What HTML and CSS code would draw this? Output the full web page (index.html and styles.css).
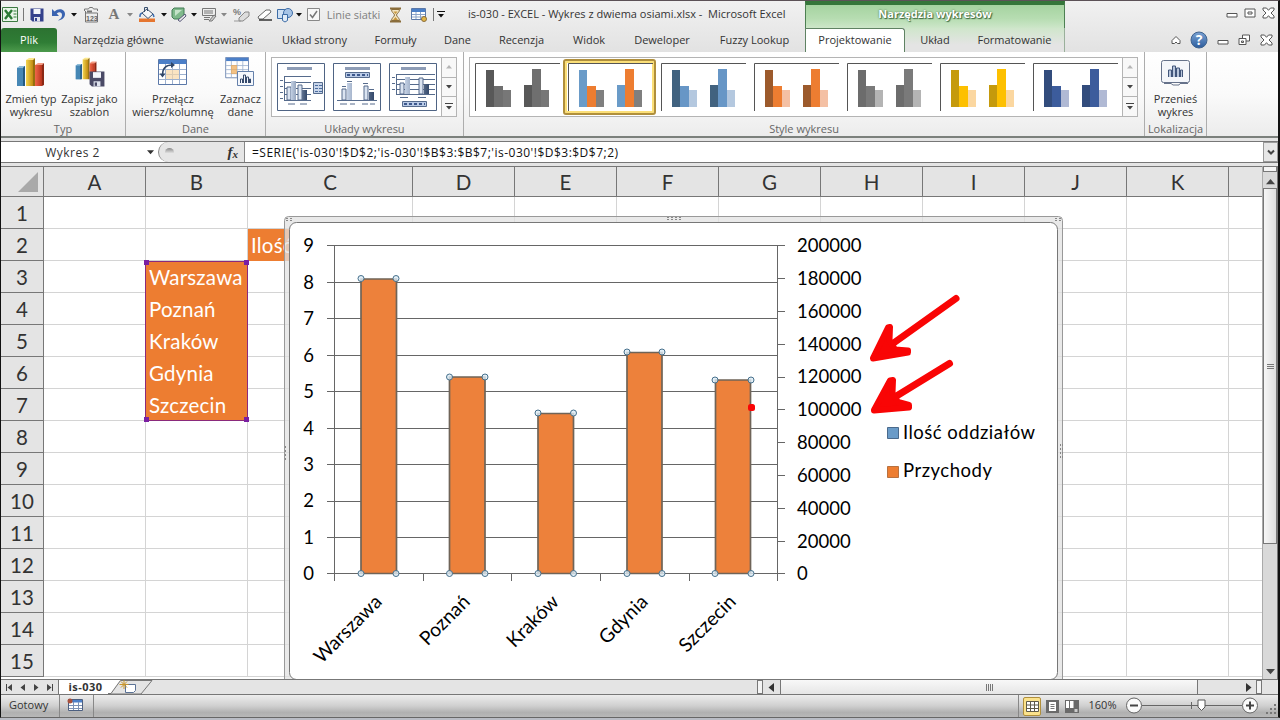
FILE: index.html
```
<!DOCTYPE html>
<html lang="pl">

<head>
    <meta charset="UTF-8">
    <title>is-030 - EXCEL - Wykres z dwiema osiami.xlsx - Microsoft Excel</title>
    <link rel="stylesheet" href="styles.css">
</head>

<body>
    <svg class="defs">
        <defs>
            <linearGradient id="gBlue"><stop offset="0" stop-color="#7db4dc"/><stop offset="1" stop-color="#2c6a9a"/></linearGradient>
            <linearGradient id="gYellow"><stop offset="0" stop-color="#f4d650"/><stop offset="1" stop-color="#c08a10"/></linearGradient>
            <linearGradient id="gRed"><stop offset="0" stop-color="#f0674a"/><stop offset="1" stop-color="#b8341c"/></linearGradient>
            <linearGradient id="gNavy"><stop offset="0" stop-color="#c3d0e4"/><stop offset="1" stop-color="#34496b"/></linearGradient>
            <linearGradient id="gHelp" x2="0" y2="1"><stop offset="0" stop-color="#7ba3d4"/><stop offset="1" stop-color="#2c5c9c"/></linearGradient>
        </defs>
        <symbol id="dd" viewBox="0 0 6 4"><path d="M0 0h6L3 3.5z" fill="currentColor"/></symbol>
        <symbol id="up" viewBox="0 0 6 4"><path d="M0 3.5h6L3 0z" fill="currentColor"/></symbol>
        <symbol id="more" viewBox="0 0 8 7"><path d="M0 .5h8" stroke="currentColor"/><path d="M1 3h6L4 6.5z" fill="currentColor"/></symbol>
        <symbol id="bars3d" viewBox="0 0 30 30">
            <path d="M1 11l3-2h5l-1 20H1z" fill="url(#gBlue)"/>
            <path d="M1 11h6v18H1z" fill="#4687b5"/><path d="M1 11l3-2h5l-2 2z" fill="#8dbbd8"/><path d="M7 11l2-2v20H7z" fill="#245a82"/>
            <path d="M10 3h7v26h-7z" fill="url(#gYellow)"/><path d="M10 3l3-2h6l-2 2z" fill="#fbe88a"/><path d="M17 3l2-2v28h-2z" fill="#95700e"/>
            <path d="M19 8h7v21h-7z" fill="url(#gRed)"/><path d="M19 8l3-2h6l-2 2z" fill="#f59a80"/><path d="M26 8l2-2v22l-2 1z" fill="#8b2814"/>
        </symbol>
        <symbol id="floppy" viewBox="0 0 14 14"><path d="M.5 .5h13v13h-11l-2-2z" fill="currentColor"/><path d="M3.5 1h7v5h-7z" fill="#f3f5fa"/><path d="M4 9h6v4.500H4z" fill="#dfe3ee"/><path d="M5 10h2v3H5z" fill="currentColor"/></symbol>
        <symbol id="sheet" viewBox="0 0 30 27">
            <path d="M.5 .5h28v25H.5z" fill="#fff" stroke="#5b78a8"/><path d="M1 1h27v4H1z" fill="#4b7fc8"/>
            <path d="M1 10.500h27M1 15.500h27M1 20.500h27M7.500 5v20M14.500 5v20M21.500 5v20" stroke="#9db1cf" fill="none"/>
        </symbol>
        <symbol id="styleThumb" viewBox="0 0 86 49">
            <path d="M.5 48V.5H85" fill="none" stroke="#555"/>
            <path class="fa" d="M11 7h8v37h-8zM49 22h8v22h-8z"/>
            <path class="fb" d="M19 23h9v21h-9zM57 6h9v38h-9z"/>
            <path class="fc" d="M28 27h8v17h-8zM66 27h8v17h-8z"/>
        </symbol>
        <symbol id="min" viewBox="0 0 12 12"><path d="M1 6.500h10v3.500H1z" fill="#fff" stroke="#555"/></symbol>
        <symbol id="close" viewBox="0 0 13 12"><path d="M1 1h3.500l2 2.300L8.500 1H12v2L9 6l3 3v2H8.500l-2-2.300-2 2.300H1V9l3-3-3-3z" fill="#fff" stroke="#555"/></symbol>
    </svg>

    <div class="window">
        <div class="top">
            <div class="title_bar">
                <div class="qat">
                    <svg width="17" height="17"><path d="M.5 1.500h15v14H.5z" fill="#e9f4e8" stroke="#3d7a42"/><path d="M3 4l7 9M10 4l-7 9" stroke="#2c7a35" stroke-width="2.400"/><path d="M11.500 5h3M11.500 8h3M11.500 11h3" stroke="#2c7a35"/></svg>
                    <i class="sep"></i>
                    <svg class="navy" width="14" height="14"><use href="#floppy"/></svg>
                    <svg width="15" height="15"><path d="M1 2v7h7L5.700 6.600C8 4.300 11 5 11 8c0 2.500-1.500 4-4 5.500 4-.5 7-3 7-6.500C14 2.500 8 .5 3.600 4.500z" fill="#3a63b0"/></svg>
                    <svg class="black" width="6" height="4"><use href="#dd"/></svg>
                    <svg width="16" height="16"><path d="M1.500 4V2h4l1-1.500h3l1 1.500h4v2M2.500 4v11h12V6h-12" fill="none" stroke="#777"/><path d="M4 4.500h5" stroke="#777" stroke-width="2"/><text class="tiny" x="3" y="13.500">123</text></svg>
                    <b class="font_a">A</b>
                    <svg class="grey" width="6" height="4"><use href="#dd"/></svg>
                    <svg width="17" height="17"><path d="M1 12.500h16V16H1z" fill="#e57630"/><path d="M4 7l5-4 6 5-5 4.500z" fill="#f4f6fa" stroke="#39506f"/><path d="M6.500 6V1.500h3V5" fill="none" stroke="#39506f"/><path d="M4 7C1.500 8 2 10 2 11M15 8l1 3" stroke="#3f6fb2" stroke-width="1.500" fill="none"/></svg>
                    <svg class="black" width="6" height="4"><use href="#dd"/></svg>
                    <svg width="16" height="16"><path d="M3 1h10v8l-3 3H3L1 10V3z" fill="#7fb98b" stroke="#437c55"/><path d="M4 3h7L4 9z" fill="#c5e3c9"/><path d="M7 13l7-6 1 2-6 5.500z" fill="#eee" stroke="#557"/></svg>
                    <svg class="black" width="6" height="4"><use href="#dd"/></svg>
                    <svg width="16" height="16"><path d="M1.500 1.500h13v7h-13zM3 4h9M3 6h9M3 10.500h6M3 12.500h5" fill="none" stroke="#777"/><path d="M8 14l5-6 2 1-4 5z" fill="#ccc" stroke="#777"/></svg>
                    <svg class="grey" width="6" height="4"><use href="#dd"/></svg>
                    <svg width="18" height="16"><text class="pct" x="1" y="8">%</text><path d="M7 11l6-6h4v4l-6 5H7z" fill="#ddd" stroke="#888"/><path d="M2 14h7" stroke="#999"/></svg>
                    <svg width="17" height="14"><path d="M2 9l8-7h4l1 2-8 7H3z" fill="#fff" stroke="#666"/><path d="M3 12h13" stroke="#333" stroke-width="1.500"/></svg>
                    <svg width="18" height="16"><path d="M1.500 2.500h9v9h-9z" fill="#cfe0f3" stroke="#3d6ca6"/><circle cx="12" cy="6" r="4.500" fill="#a7c4e6" stroke="#3d6ca6"/><path d="M6.500 7.500h5v6l-2.500 1.500-2.500-1.500z" fill="#e0ebf7" stroke="#3d6ca6"/></svg>
                    <svg class="black" width="6" height="4"><use href="#dd"/></svg>
                    <svg width="13" height="13"><path d="M.5 .5h12v12H.5z" fill="#f7f7f7" stroke="#888"/><path d="M3 6.500l2.500 3L10 3" fill="none" stroke="#777" stroke-width="1.500"/></svg>
                    <span class="lines">Linie siatki</span>
                    <svg width="13" height="16"><path d="M1 1.500h11M1 14.500h11" stroke="#8a6d3b" stroke-width="2"/><path d="M2.500 2.500c0 3 3 4 3 5.500s-3 3-3 5.500h8c0-2.500-3-4-3-5.500s3-2.500 3-5.500z" fill="#f4e6c3" stroke="#8a6d3b"/><path d="M4 13l2.500-3L9 13zM4.500 4.500h4l-2 2.500z" fill="#c7953a"/></svg>
                    <svg width="17" height="16"><path d="M.5 1.500h14v11H.5z" fill="#fff" stroke="#5b78a8"/><path d="M1 2h13v3H1z" fill="#4b7fc8"/><path d="M1 7.500h13M1 10h13M5 5v7M9.500 5v7" stroke="#8ba3c8"/><circle cx="13" cy="12" r="2.500" fill="#e4b746" stroke="#8a6d3b"/></svg>
                    <i class="sep"></i>
                    <svg class="black" width="8" height="7"><use href="#more"/></svg>
                </div>
                <div class="title">is-030 - EXCEL - Wykres z dwiema osiami.xlsx -&nbsp; Microsoft Excel</div>
                <div class="context">Narzędzia wykresów</div>
                <div class="win_btns">
                    <svg width="12" height="12"><use href="#min"/></svg>
                    <svg width="12" height="12"><path d="M1 2h10v8H1z" fill="#fff" stroke="#555"/><path d="M4 5h4v2H4z" fill="none" stroke="#555"/></svg>
                    <svg width="13" height="12"><use href="#close"/></svg>
                </div>
            </div>
            <div class="tabs">
                <a class="file">Plik</a>
                <a>Narzędzia główne</a>
                <a>Wstawianie</a>
                <a>Układ strony</a>
                <a>Formuły</a>
                <a>Dane</a>
                <a>Recenzja</a>
                <a>Widok</a>
                <a>Deweloper</a>
                <a>Fuzzy Lookup</a>
                <a class="active">Projektowanie</a>
                <a class="ctx">Układ</a>
                <a class="ctx last">Formatowanie</a>
                <div class="doc_btns">
                    <svg width="10" height="10"><path d="M1 5.500L5 1.500l4 4v3H6.500L5 7 3.500 8.500H1z" fill="#fff" stroke="#555"/></svg>
                    <svg width="18" height="18"><circle cx="9" cy="9" r="8" fill="url(#gHelp)" stroke="#3f638f"/><text class="help" x="9" y="14">?</text></svg>
                    <svg width="12" height="12"><use href="#min"/></svg>
                    <svg width="13" height="12"><path d="M4.500 1h7v6h-7z" fill="#fff" stroke="#555"/><path d="M1 4.500h7v6H1z" fill="#fff" stroke="#555"/><path d="M3.500 7h2v1.500h-2z" fill="none" stroke="#555"/></svg>
                    <svg width="13" height="12"><use href="#close"/></svg>
                </div>
            </div>
        </div>

        <div class="ribbon">
            <div class="group g_type">
                <div class="tools">
                    <div class="tool"><svg width="30" height="30"><use href="#bars3d"/></svg><span>Zmień typ<br>wykresu</span></div>
                    <div class="tool"><svg width="32" height="30"><use href="#bars3d" width="25" height="23"/><g class="slate"><use href="#floppy" x="15" y="14" width="16" height="16"/></g></svg><span>Zapisz jako<br>szablon</span></div>
                </div>
                <h6>Typ</h6>
            </div>
            <div class="group g_data">
                <div class="tools">
                    <div class="tool"><svg width="30" height="30"><use href="#sheet" y="2" width="30" height="27"/><path d="M8 13h13v9H8z" fill="#f8d9a8" opacity=".7"/><path d="M4.500 18C4.500 11 8 8 14 8" fill="none" stroke="#2f4668" stroke-width="1.500"/><path d="M1.500 16.500h6l-3 4zM13 5v6l4-3z" fill="#2f4668"/></svg><span>Przełącz<br>wiersz/kolumnę</span></div>
                    <div class="tool"><svg width="30" height="30"><use href="#sheet" width="25" height="22"/><path d="M6 8h6v9H6z" fill="#f0a850" opacity=".7"/><path d="M12.500 14.500h16v14h-16z" fill="#f4f7fc" stroke="#6480aa"/><path d="M15.500 26v-4h2v4m1 0v-8h2v8m1 0v-6h2v6m1 0v-4h1v4" fill="none" stroke="#35496b"/></svg><span>Zaznacz<br>dane</span></div>
                </div>
                <h6>Dane</h6>
            </div>
            <div class="group g_layouts">
                <div class="gallery">
                    <div class="items">
                        <svg width="48" height="48"><path d="M.5 .5h47v47H.5z" fill="#fff" stroke="#4f6484"/><path d="M10 5.500h25" stroke="#8d9cb6" stroke-width="3"/><path d="M7 13.500h27M7 19.500h27M7 25.500h27M7 31.500h27M7 37.500h27M7.500 13v25M3 17.500h3M3 23.500h3M3 29.500h3M3 35.500h3M11 41h7M23 41h7" stroke="#566b8c" fill="none"/><path d="M10 24h4v13h-4zM21 22h4v15h-4z" fill="#dbe4f1" stroke="#566b8c"/><path d="M14 18h5v19h-5zM25 27h5v10h-5z" fill="url(#gNavy)"/><path d="M36.500 19.500h9v11h-9z" fill="#c8d5ea" stroke="#566b8c"/><path d="M38 22.500h3m1 0h3M38 25.500h3m1 0h3M38 28.500h3m1 0h3" stroke="#4b6c9e"/></svg>
                        <svg width="48" height="48"><path d="M.5 .5h47v47H.5z" fill="#fff" stroke="#4f6484"/><path d="M12 5.500h25" stroke="#8d9cb6" stroke-width="3"/><path d="M12.500 9.500h24v5h-24z" fill="#b9cae6" stroke="#566b8c"/><path d="M14 12h21" stroke="#3d588c" stroke-width="2" stroke-dasharray="3 2"/><path d="M4 37.500h40M7 41h7M17 41h5M29 41h6M37 41h5M9 23.500h4M14 18.500h5M30 20.500h5M36 26.500h5" stroke="#566b8c"/><path d="M9 26h4v11H9zM31 23h4v14h-4z" fill="#dbe4f1" stroke="#566b8c"/><path d="M14 20h5v17h-5zM36 29h5v8h-5z" fill="url(#gNavy)"/></svg>
                        <svg width="48" height="48"><path d="M.5 .5h47v47H.5z" fill="#fff" stroke="#4f6484"/><path d="M12 5.500h25" stroke="#8d9cb6" stroke-width="3"/><path d="M7 11.500h39M7 16.500h39M7 21.500h39M7 26.500h39M7 31.500h39M7.500 11v21M3 14.500h3M3 20.500h3M3 26.500h3M11 34.500h8M29 34.500h8" stroke="#566b8c"/><path d="M11 20h4v11h-4zM30 15h4v16h-4z" fill="#dbe4f1" stroke="#566b8c"/><path d="M16 14h5v17h-5zM35 21h5v10h-5z" fill="url(#gNavy)"/><path d="M13.500 38.500h24v5h-24z" fill="#b9cae6" stroke="#566b8c"/><path d="M15 41h21" stroke="#3d588c" stroke-width="2" stroke-dasharray="3 2"/></svg>
                    </div>
                    <div class="scroller">
                        <b class="off"><svg width="6" height="4"><use href="#up"/></svg></b>
                        <b><svg width="6" height="4"><use href="#dd"/></svg></b>
                        <b><svg width="8" height="7"><use href="#more"/></svg></b>
                    </div>
                </div>
                <h6>Układy wykresu</h6>
            </div>
            <div class="group g_styles">
                <div class="gallery">
                    <div class="styles">
                        <div class="style s1"><svg width="86" height="49"><use href="#styleThumb"/></svg></div>
                        <div class="style s2 selected"><svg width="86" height="49"><use href="#styleThumb"/></svg></div>
                        <div class="style s3"><svg width="86" height="49"><use href="#styleThumb"/></svg></div>
                        <div class="style s4"><svg width="86" height="49"><use href="#styleThumb"/></svg></div>
                        <div class="style s5"><svg width="86" height="49"><use href="#styleThumb"/></svg></div>
                        <div class="style s6"><svg width="86" height="49"><use href="#styleThumb"/></svg></div>
                        <div class="style s7"><svg width="86" height="49"><use href="#styleThumb"/></svg></div>
                    </div>
                    <div class="scroller">
                        <b class="off"><svg width="6" height="4"><use href="#up"/></svg></b>
                        <b><svg width="6" height="4"><use href="#dd"/></svg></b>
                        <b><svg width="8" height="7"><use href="#more"/></svg></b>
                    </div>
                </div>
                <h6>Style wykresu</h6>
            </div>
            <div class="group g_place">
                <div class="tools">
                    <div class="tool"><svg width="30" height="30"><rect x=".5" y="3.500" width="28" height="22" rx="2" fill="#f4f6fa" stroke="#66728a"/><path d="M3 26.500h7l2 1.500h6l1-1.500h8" stroke="#66728a" fill="none"/><path d="M7.500 20v-7h3v7m1 0V9h3v11m1 0v-9h3v9m1 0v-7h2v7" fill="#b9c6dc" stroke="#41557a"/></svg><span>Przenieś<br>wykres</span></div>
                </div>
                <h6>Lokalizacja</h6>
            </div>
        </div>

        <div class="formula_bar">
            <div class="name_box"><span>Wykres 2</span><svg width="7" height="5"><use href="#dd"/></svg></div>
            <div class="fx"><i class="knob"></i><em>f<sub>x</sub></em></div>
            <div class="formula">=SERIE('is-030'!$D$2;'is-030'!$B$3:$B$7;'is-030'!$D$3:$D$7;2)</div>
            <div class="expand"><svg width="8" height="7"><path d="M1 1.500l3 3 3-3" fill="none" stroke="#444" stroke-width="2"/></svg></div>
        </div>

        <div class="work">
            <div class="sheet">
                <table>
                    <colgroup><col class="c_num"><col><col><col class="c_wide"><col><col><col><col><col><col><col><col><col class="c_end"></colgroup>
                    <tr class="head"><th class="corner"><svg width="22" height="22"><path d="M21 1v20H1z" fill="#a9a9a9"/></svg></th><th>A</th><th>B</th><th>C</th><th>D</th><th>E</th><th>F</th><th>G</th><th>H</th><th>I</th><th>J</th><th>K</th><th></th></tr>
                    <tr><th>1</th><td></td><td></td><td></td><td></td><td></td><td></td><td></td><td></td><td></td><td></td><td></td><td></td></tr>
                    <tr><th>2</th><td></td><td></td><td class="fill">Ilość</td><td></td><td></td><td></td><td></td><td></td><td></td><td></td><td></td><td></td></tr>
                    <tr><th>3</th><td></td><td class="fill">Warszawa</td><td></td><td></td><td></td><td></td><td></td><td></td><td></td><td></td><td></td><td></td></tr>
                    <tr><th>4</th><td></td><td class="fill">Poznań</td><td></td><td></td><td></td><td></td><td></td><td></td><td></td><td></td><td></td><td></td></tr>
                    <tr><th>5</th><td></td><td class="fill">Kraków</td><td></td><td></td><td></td><td></td><td></td><td></td><td></td><td></td><td></td><td></td></tr>
                    <tr><th>6</th><td></td><td class="fill">Gdynia</td><td></td><td></td><td></td><td></td><td></td><td></td><td></td><td></td><td></td><td></td></tr>
                    <tr><th>7</th><td></td><td class="fill">Szczecin</td><td></td><td></td><td></td><td></td><td></td><td></td><td></td><td></td><td></td><td></td></tr>
                    <tr><th>8</th><td></td><td></td><td></td><td></td><td></td><td></td><td></td><td></td><td></td><td></td><td></td><td></td></tr>
                    <tr><th>9</th><td></td><td></td><td></td><td></td><td></td><td></td><td></td><td></td><td></td><td></td><td></td><td></td></tr>
                    <tr><th>10</th><td></td><td></td><td></td><td></td><td></td><td></td><td></td><td></td><td></td><td></td><td></td><td></td></tr>
                    <tr><th>11</th><td></td><td></td><td></td><td></td><td></td><td></td><td></td><td></td><td></td><td></td><td></td><td></td></tr>
                    <tr><th>12</th><td></td><td></td><td></td><td></td><td></td><td></td><td></td><td></td><td></td><td></td><td></td><td></td></tr>
                    <tr><th>13</th><td></td><td></td><td></td><td></td><td></td><td></td><td></td><td></td><td></td><td></td><td></td><td></td></tr>
                    <tr><th>14</th><td></td><td></td><td></td><td></td><td></td><td></td><td></td><td></td><td></td><td></td><td></td><td></td></tr>
                    <tr><th>15</th><td></td><td></td><td></td><td></td><td></td><td></td><td></td><td></td><td></td><td></td><td></td><td></td></tr>
                </table>

                <!-- zakres kategorii -->
                <div class="range"><i></i><i></i><i></i><i></i></div>

                <!-- wykres -->
                <div class="chart">
                    <svg width="780" height="464" viewBox="284 216 780 464">
                        <rect class="frame" x="284.500" y="216.500" width="778" height="475" rx="4"/>
                        <rect class="area" x="289.500" y="222.500" width="768" height="457" rx="7"/>
                        <path class="dots" d="M667 217.500h16M667 219.500h16M286 218.500h7M286 220.500h7M1055 218.500h7M1055 220.500h7M285.500 446v14M1060.500 444v14M1062.500 444v14"/>
                        <path class="axis" d="M327 245.500h450M327 282.500h450M327 318.500h450M327 355.500h450M327 391.500h450M327 428.500h450M327 464.500h450M327 501.500h450M327 537.500h450M327 573.500h450"/>
                        <path class="axis" d="M334.500 245v336M423.500 574v7M511.500 574v7M600.500 574v7M689.500 574v7M777.500 245v336"/>
                        <path class="axis" d="M778 245.500h7M778 278.500h7M778 311.500h7M778 344.500h7M778 377.500h7M778 409.500h7M778 442.500h7M778 475.500h7M778 508.500h7M778 541.500h7M778 573.500h7"/>
                        <g class="bars">
                            <path d="M361 279h35.500v294.500H361zM449.500 377H485v196.500h-35.500zM538 413.500h35.500v160H538zM627 352.500h35v221h-35zM715.500 380h35v193.500h-35z"/>
                        </g>
                        <g class="handles">
                            <circle cx="361" cy="278.500" r="3"/><circle cx="396" cy="278.500" r="3"/><circle cx="361" cy="573.500" r="3"/><circle cx="396" cy="573.500" r="3"/>
                            <circle cx="449.500" cy="377" r="3"/><circle cx="485" cy="377" r="3"/><circle cx="449.500" cy="573.500" r="3"/><circle cx="485" cy="573.500" r="3"/>
                            <circle cx="538" cy="413" r="3"/><circle cx="573.500" cy="413" r="3"/><circle cx="538" cy="573.500" r="3"/><circle cx="573.500" cy="573.500" r="3"/>
                            <circle cx="627" cy="352" r="3"/><circle cx="662" cy="352" r="3"/><circle cx="627" cy="573.500" r="3"/><circle cx="662" cy="573.500" r="3"/>
                            <circle cx="715" cy="380" r="3"/><circle cx="751" cy="380" r="3"/><circle cx="715" cy="573.500" r="3"/><circle cx="751" cy="573.500" r="3"/>
                        </g>
                        <g class="label left">
                            <text x="308.500" y="252">9</text><text x="308.500" y="288.500">8</text><text x="308.500" y="325">7</text><text x="308.500" y="361.500">6</text><text x="308.500" y="398">5</text>
                            <text x="308.500" y="434.500">4</text><text x="308.500" y="470.500">3</text><text x="308.500" y="507">2</text><text x="308.500" y="543.500">1</text><text x="308.500" y="580">0</text>
                        </g>
                        <g class="label">
                            <text x="797" y="252">200000</text><text x="797" y="284.500">180000</text><text x="797" y="317.500">160000</text><text x="797" y="350.500">140000</text><text x="797" y="383">120000</text><text x="797" y="416">100000</text>
                            <text x="797" y="448.500">80000</text><text x="797" y="481.500">60000</text><text x="797" y="514.500">40000</text><text x="797" y="547.500">20000</text><text x="797" y="580">0</text>
                        </g>
                        <g class="label cat">
                            <text transform="translate(383 603) rotate(-45)">Warszawa</text>
                            <text transform="translate(471 603) rotate(-45)">Poznań</text>
                            <text transform="translate(560 603) rotate(-45)">Kraków</text>
                            <text transform="translate(649 603) rotate(-45)">Gdynia</text>
                            <text transform="translate(737 603) rotate(-45)">Szczecin</text>
                        </g>
                        <path d="M887.500 427.500h11v11h-11z" fill="#6a9bc8" stroke="#4a6a8c"/>
                        <path d="M887.500 466.500h11v11h-11z" fill="#ed7d31" stroke="#b8713f"/>
                        <g class="label">
                            <text x="903" y="439" textLength="132">Ilość oddziałów</text>
                            <text x="903" y="477" textLength="89">Przychody</text>
                        </g>
                        <g class="arrows">
                            <path class="shaft" d="M956 298.500L888 347"/><path d="M873 358L888 327.500L890 327L889.500 340L895 349.500L908 350.500V352.500L873 358.500z"/>
                            <path class="shaft" d="M949.500 363.500L890 400"/><path d="M874 410L890 380.500L893 380L892.500 393L898 402L909 405V407.500L874 410.500z"/>
                            <rect x="748" y="404" width="7" height="7" rx="2.500"/>
                        </g>
                    </svg>
                </div>
            </div>
            <div class="vscroll">
                <i class="split"></i>
                <svg class="btn" width="9" height="6"><use href="#up"/></svg>
                <div class="thumb"><i></i><i></i><i></i></div>
                <svg class="btn end" width="9" height="6"><use href="#dd"/></svg>
            </div>
        </div>

        <div class="sheet_bar">
            <svg width="57" height="15"><path d="M5.500 4v7M11 4v7L6.500 7.500zM24 4v7l-4.500-3.500zM33 4v7l4.500-3.500zM46 4v7l4.500-3.500z" fill="#444"/><path d="M5.500 4v7M51.500 4v7" stroke="#444"/></svg>
            <div class="sheet_tab">is-030</div>
            <svg class="tab_ends" width="46" height="15"><path d="M0 0h12L2 14H0z" fill="#fff"/><path d="M12.500 .5L3 13.500H0M12.500 .5H44L33 14H3" fill="none" stroke="#777"/><path d="M17.500 4.500h10v6l-2 2h-8z" fill="#fff" stroke="#5c7396"/><path d="M16 0v9M11.500 4.500h9M13 1.500l6 6M19 1.500l-6 6" stroke="#c9962b"/></svg>
            <div class="fill_bar"></div>
            <i class="grip"></i>
            <svg width="17" height="15"><path d="M11 3v9L5.500 7.500z" fill="#333"/></svg>
            <div class="hthumb"><i></i><i></i><i></i><i></i></div>
            <div class="htrack"><svg width="6" height="9"><path d="M0 0v9l5.500-4.500z" fill="#333"/></svg></div>
            <i class="grip"></i>
        </div>

        <div class="status">
            <span class="ready">Gotowy</span>
            <svg class="macro" width="33" height="15"><path d="M8.500 1.500h14v11h-14z" fill="#fff" stroke="#4c5f80"/><path d="M9 2h13v2.500H9z" fill="#4c7fc8"/><path d="M9 7.500h13M9 10.500h13M13.500 4v8M18.500 4v8" stroke="#7d92b5"/><circle cx="10" cy="3" r="2.500" fill="#a8503c"/></svg>
            <div class="view">
                <b class="on"><svg width="13" height="11"><path d="M.5 .5h12v10H.5zM0 4h13M0 7.500h13M4.500 0v11M8.500 0v11" fill="#fff" stroke="#5f5a48"/></svg></b>
                <b><svg width="13" height="13"><path d="M0 0h13v13H0z" fill="#6a6a6a"/><path d="M3 2h7v9H3z" fill="#fff"/><path d="M4.500 4.500h4M4.500 6.500h4M4.500 8.500h4" stroke="#777"/></svg></b>
                <b><svg width="14" height="13"><path d="M0 0h14v13H0z" fill="#6a6a6a"/><path d="M1 1h3v7H1zM5 1h3.500v7H5z" fill="#fff"/><path d="M9.500 9h3v3h-3z" fill="#ccc"/></svg></b>
            </div>
            <span class="zoom">160%</span>
            <svg width="154" height="22">
                <path d="M18 10.500h100" stroke="#666"/><path d="M67.500 7v7" stroke="#666"/>
                <circle cx="10" cy="10.500" r="7.500" fill="#fafafa" stroke="#666"/><path d="M6 10.500h8" stroke="#444" stroke-width="2"/>
                <path d="M74 5h7v7l-3.500 3.500L74 12z" fill="#fff" stroke="#555"/>
                <circle cx="126" cy="10.500" r="7.500" fill="#fafafa" stroke="#666"/><path d="M122 10.500h8M126 6.500v8" stroke="#444" stroke-width="2"/>
                <path d="M142 17h2v2h-2zM146 17h2v2h-2zM150 17h2v2h-2zM146 13h2v2h-2zM150 13h2v2h-2zM150 9h2v2h-2z" fill="#777"/>
            </svg>
        </div>
    </div>
</body>

</html>
```
FILE: styles.css
```
* {
    padding: 0;
    margin: 0;
    box-sizing: border-box;
}

body {
    width: 1280px;
    height: 720px;
    overflow: hidden;
    background: #b9bcc4;
    font: 11px "Open Sans", "Noto Sans", sans-serif;
    color: #333;
}

svg {
    display: block;
    flex: none;
}

.defs {
    width: 0;
    height: 0;
    position: absolute;
}

.window {
    width: 1280px;
    height: 718px;
    display: flex;
    flex-direction: column;
    border-left: 1px solid #111;
    border-right: 2px solid #111;
    border-top: 1px solid #5c5257;
    border-bottom: 1px solid #666;
    background: #e4e4e4;
}

/* pasek tytułu */
.top {
    height: 51px;
    background: linear-gradient(#f1f1f1, #e2e2e2);
}

.title_bar {
    height: 27px;
    display: grid;
    grid-template-columns: 446px 358px 260px 1fr;
}

.qat {
    display: grid;
    grid-template-columns: 18px 8px 20px 22px 9px 25px 22px 9px 25px 10px 20px 10px 20px 10px 24px 22px 20px 8px 20px 61px 23px 24px 5px 10px;
    align-items: center;
    justify-items: center;
}

.qat .sep {
    width: 1px;
    height: 13px;
    background: #777;
}

.black {
    color: #111;
}

.grey {
    color: #888;
}

.navy {
    color: #34418c;
}

.slate {
    color: #4a4a66;
}

.font_a {
    font: bold 15px "Liberation Serif", serif;
    color: #777;
}

.tiny {
    font: bold 7px "Liberation Sans", sans-serif;
    fill: #666;
}

.pct {
    font: bold 9px "Liberation Sans", sans-serif;
    fill: #777;
}

.help {
    font: bold 14px "Open Sans", sans-serif;
    fill: #fff;
    text-anchor: middle;
}

.lines {
    color: #808080;
    white-space: nowrap;
}

.title {
    line-height: 26px;
    padding-left: 21px;
    white-space: nowrap;
}

.context {
    border-top: 4px solid #35763a;
    border-left: 1px solid #4d8052;
    border-right: 1px solid #4d8052;
    background: linear-gradient(#a5d3a0, #b7ddb2 60%, #cde6c9);
    line-height: 17px;
    text-align: center;
    color: #fff;
    font-weight: bold;
    text-shadow: 0 0 2px #3d6b40, 1px 1px 1px #3d6b40;
}

.win_btns,
.doc_btns {
    display: flex;
    justify-content: flex-end;
    align-items: center;
}

.win_btns {
    gap: 6px;
    padding-right: 3px;
    padding-bottom: 3px;
}

.tabs {
    height: 24px;
    display: grid;
    grid-template-columns: 56px 123px 88px 93px 69px 55px 73px 62px 84px 101px 100px 60px 100px 1fr;
}

.tabs a,
.doc_btns {
    border-bottom: 1px solid #5f8263;
    line-height: 24px;
    text-align: center;
    white-space: nowrap;
}

.tabs .file {
    background: linear-gradient(#2c7231, #2f7d35 60%, #4c9a4c);
    color: #fff;
    border-radius: 3px 3px 0 0;
}

.tabs .active {
    background: #fff;
    border: 1px solid #5f8263;
    border-bottom: 0;
    border-radius: 0 3px 0 0;
    line-height: 22px;
}

.tabs .ctx {
    background: linear-gradient(#cfe6cb, #e4e4e4 70%);
}

.tabs .last {
    border-right: 1px solid #9ab09b;
}

.doc_btns {
    gap: 9px;
    padding-right: 5px;
}

/* wstążka */
.ribbon {
    height: 86px;
    display: flex;
    background: linear-gradient(#fff, #fafafa 50%, #ececec);
    border-bottom: 2px solid #7b807c;
}

.group {
    display: flex;
    flex-direction: column;
    border-right: 1px solid #adadad;
}

.g_type {
    width: 125px;
}

.g_data {
    width: 140px;
}

.g_layouts {
    width: 198px;
}

.g_styles {
    width: 681px;
}

.g_place {
    width: 62px;
}

.group h6 {
    font-size: 11px;
    font-weight: normal;
    line-height: 16px;
    text-align: center;
    color: #666;
    margin-top: auto;
    margin-bottom: -1px;
    white-space: nowrap;
}

.tools {
    display: flex;
    padding-top: 5px;
}

.tool {
    flex: 1;
    display: flex;
    flex-direction: column;
    align-items: center;
    text-align: center;
    line-height: 13px;
    white-space: nowrap;
}

.tool span {
    padding-top: 5px;
}

.g_type .tool:first-child {
    flex: 0 0 60px;
}

.g_type .tool + .tool {
    flex: 0 0 57px;
}

.g_data .tool {
    flex: 0 0 94px;
}

.g_data .tool + .tool {
    flex-basis: 36px;
}

.gallery {
    height: 60px;
    margin: 5px 6px 0 5px;
    display: flex;
    border: 1px solid #b4b4b4;
    background: #fff;
}

.items {
    flex: 1;
    display: flex;
    gap: 8px;
    padding: 5px 0 0 5px;
}

.styles {
    flex: 1;
    display: flex;
}

.style {
    width: 93px;
    padding: 4px 0 0 4px;
    border: 1px solid transparent;
}

.style svg {
    width: 86px;
}

.selected {
    margin: 1px 0;
    padding: 2px 0 0 3px;
    border: 2px solid #b08f3c;
    border-radius: 3px;
    background: #fff;
    box-shadow: inset 0 0 0 2px #fbdf78;
}

.scroller {
    width: 15px;
    display: flex;
    flex-direction: column;
    border-left: 1px solid #b4b4b4;
    color: #444;
}

.scroller b {
    flex: 1;
    display: flex;
    align-items: center;
    justify-content: center;
    background: #f8f8f8;
}

.scroller b + b {
    border-top: 1px solid #b4b4b4;
}

.scroller .off {
    color: #b5b5b5;
}

.fa {
    fill: var(--a);
}

.fb {
    fill: var(--b);
}

.fc {
    fill: var(--c);
}

.s1 {
    --a: #585858;
    --b: #6f6f6f;
    --c: #777;
}

.s2 {
    --a: #6a9bc8;
    --b: #ed7d31;
    --c: #7f7f7f;
}

.s3 {
    --a: #41627f;
    --b: #6796c6;
    --c: #b4c8df;
}

.s4 {
    --a: #9c5a2c;
    --b: #ed7d31;
    --c: #f4c0a4;
}

.s5 {
    --a: #6c6c6c;
    --b: #7a7a7a;
    --c: #b4b4b4;
}

.s6 {
    --a: #c59a0c;
    --b: #fdc000;
    --c: #fbd7a0;
}

.s7 {
    --a: #324c7c;
    --b: #3c5c9c;
    --c: #b0b9d4;
}

/* pasek formuły */
.formula_bar {
    height: 22px;
    margin: 3px 0;
    display: flex;
    border-top: 1px solid #777;
    border-bottom: 1px solid #777;
    background: #fff;
    font-size: 12px;
    letter-spacing: .49px;
    line-height: 21px;
}

.name_box {
    width: 157px;
    display: flex;
    align-items: center;
    padding-right: 4px;
}

.name_box span {
    flex: 1;
    text-align: center;
    padding-right: 3px;
}

.fx {
    width: 87px;
    display: flex;
    justify-content: space-between;
    align-items: center;
    padding: 0 6px;
    border: solid #888;
    border-width: 0 1px;
    border-radius: 11px 0 0 11px;
    background: #e6e6e6;
}

.knob {
    width: 9px;
    height: 9px;
    border-radius: 50%;
    background: linear-gradient(#888, #e6e6e6 60%);
}

.fx em {
    font: italic bold 15px "Liberation Serif", serif;
    letter-spacing: 0;
}

.fx sub {
    font-size: 11px;
    vertical-align: -1px;
}

.formula {
    flex: 1;
    padding-left: 7px;
    color: #111;
}

.expand {
    width: 15px;
    display: flex;
    align-items: center;
    justify-content: center;
    border: 1px solid #999;
    background: #e6e6e6;
}

/* arkusz */
.work {
    height: 513px;
    display: flex;
}

.sheet {
    width: 1261px;
    position: relative;
    overflow: hidden;
    background: #fff;
    border-top: 1px solid #777;
}

table {
    width: 1262px;
    table-layout: fixed;
    border-collapse: separate;
    border-spacing: 0;
    font: 20.500px Lato, "Open Sans", sans-serif;
}

col {
    width: 102px;
}

.c_num {
    width: 43px;
}

.c_wide {
    width: 165px;
}

.c_end {
    width: 36px;
}

tr {
    height: 32px;
}

.head {
    height: 30px;
}

th {
    font-weight: normal;
    background: #e4e4e4;
    border-right: 1px solid #777;
    border-bottom: 1px solid #777;
}

td {
    border-right: 1px solid #d4d4d4;
    border-bottom: 1px solid #d4d4d4;
    white-space: nowrap;
}

.corner svg {
    margin-left: 16px;
}

.fill {
    background: #ed7d31;
    border-color: #ed7d31;
    color: #fff;
    padding-left: 3px;
    letter-spacing: .2px;
}

.range {
    position: absolute;
    left: 144px;
    top: 94px;
    width: 103px;
    height: 160px;
    border: 1px solid #8a2a7c;
}

.range i {
    position: absolute;
    width: 5px;
    height: 5px;
    background: #7a1fa2;
}

.range i:nth-child(1) {
    left: -2px;
    top: -2px;
}

.range i:nth-child(2) {
    right: -2px;
    top: -2px;
}

.range i:nth-child(3) {
    left: -2px;
    bottom: -2px;
}

.range i:nth-child(4) {
    right: -2px;
    bottom: -2px;
}

.chart {
    position: absolute;
    left: 283px;
    top: 49px;
}

.frame {
    fill: rgba(226, 226, 226, .75);
    stroke: #999;
}

.area {
    fill: #fff;
    stroke: #777;
}

.dots {
    stroke: #888;
    stroke-dasharray: 2 2;
}

.axis {
    stroke: #666;
    fill: none;
}

.bars path {
    fill: #ed813b;
    stroke: #6f6458;
    stroke-width: 1.700;
}

.handles circle {
    fill: #dcebf5;
    fill-opacity: .8;
    stroke: #46708c;
}

.label {
    font: 18.500px Lato, "Open Sans", sans-serif;
    fill: #000;
}

.left {
    text-anchor: middle;
}

.cat {
    font-size: 19.300px;
    text-anchor: end;
}

.arrows {
    fill: #f90505;
}

.arrows path {
    stroke: #f90505;
    stroke-width: 6;
    stroke-linejoin: round;
}

.arrows .shaft {
    stroke-width: 7;
    stroke-linecap: round;
}

.vscroll {
    flex: 1;
    display: flex;
    flex-direction: column;
    align-items: center;
    background: #d9d9d9;
    color: #444;
    border-left: 1px solid #aaa;
    border-right: 1px solid #777;
}

.split {
    width: 14px;
    height: 6px;
    margin-bottom: 7px;
    border: 1px solid #777;
    background: #f4f4f4;
}

.thumb {
    width: 14px;
    height: 356px;
    margin-top: 3px;
    display: flex;
    flex-direction: column;
    align-items: center;
    justify-content: center;
    gap: 1px;
    border: 1px solid #777;
    background: linear-gradient(90deg, #f6f6f6, #dedede);
}

.thumb i {
    width: 7px;
    height: 1px;
    background: #777;
}

.end {
    margin-top: auto;
    margin-bottom: 4px;
}

/* zakładki arkuszy */
.sheet_bar {
    height: 16px;
    display: flex;
    border-top: 1px solid #777;
    border-bottom: 1px solid #777;
    background: #e4e4e4;
}

.sheet_tab {
    width: 50px;
    border-left: 1px solid #777;
    background: #fff;
    font-weight: bold;
    letter-spacing: .5px;
    line-height: 14px;
    text-align: center;
    padding-left: 4px;
}

.fill_bar {
    flex: 1;
}

.grip {
    width: 6px;
    border: 1px solid #777;
    background: #f4f4f4;
}

.hthumb {
    width: 418px;
    display: flex;
    align-items: center;
    justify-content: center;
    gap: 1px;
    border: solid #777;
    border-width: 0 1px;
    background: linear-gradient(#f8f8f8, #e6e6e6);
}

.hthumb i {
    width: 1px;
    height: 7px;
    background: #777;
}

.htrack {
    width: 58px;
    display: flex;
    justify-content: flex-end;
    align-items: center;
    padding-right: 4px;
}

.sheet_bar .grip:last-child {
    margin-right: 16px;
}

/* pasek stanu */
.status {
    flex: 1;
    display: flex;
    background: linear-gradient(#ededed, #cfcfcf 50%, #b0b0b0 80%, #b8b8b8);
    line-height: 20px;
}

.ready {
    width: 59px;
    padding-left: 8px;
    border-right: 1px solid #888;
}

.macro {
    height: 22px;
    width: 34px;
    padding-top: 3px;
    border-right: 1px solid #888;
}

.view {
    margin-left: auto;
    padding-left: 4px;
    display: flex;
    align-items: center;
    gap: 2px;
    border-left: 1px solid #888;
}

.view b {
    width: 18px;
    height: 19px;
    display: flex;
    align-items: center;
    justify-content: center;
}

.view .on {
    border: 1px solid #b08f3c;
    border-radius: 2px;
    background: #fbe28c;
}

.zoom {
    width: 43px;
    text-align: center;
}
```
